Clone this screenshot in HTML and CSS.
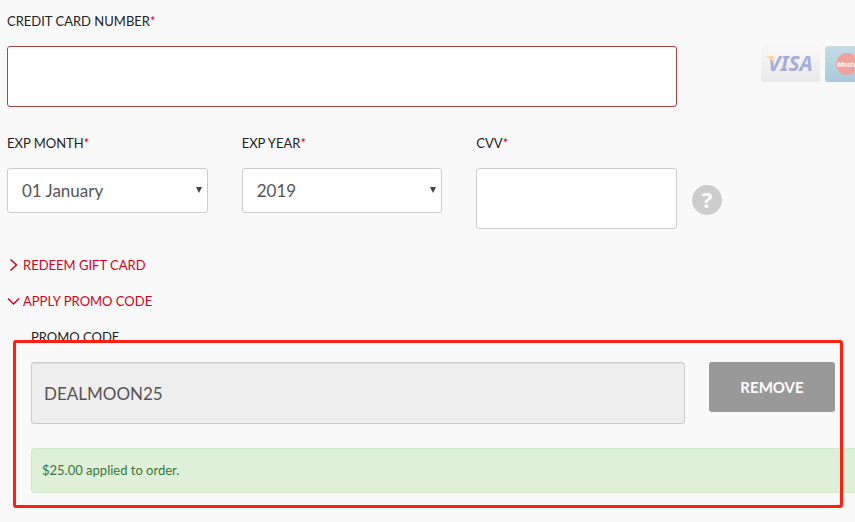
FILE: index.html
```html
<!DOCTYPE html>
<html lang="en">
  <head>
    <meta charset="utf-8">
    <meta name="viewport" content="width=device-width, initial-scale=1.0">
    <title>Payment</title>
    <link rel="stylesheet" href="styles.css">
  </head>
  <body>
    <form class="payment">
      <div class="row">
        <div class="field">
          <label for="card-number">CREDIT CARD NUMBER<span class="required">*</span></label>
          <input type="text" id="card-number" class="control error">
        </div>
        <div class="cards">
          <svg width="59" height="36" viewBox="0 0 59 36" role="img" aria-label="Visa">
            <defs>
              <linearGradient id="visa-bg" x1="0" y1="0" x2="0" y2="1">
                <stop offset="0" stop-color="#f8f8f8" />
                <stop offset="1" stop-color="#e8e8e8" />
              </linearGradient>
            </defs>
            <rect width="59" height="36" rx="3" fill="url(#visa-bg)" />
            <text x="7" y="25" class="visa-text">VISA</text>
            <path d="M4 10h8l1 8q-3-6-9-8z" fill="#fbd5a0" />
          </svg>
          <svg width="59" height="36" viewBox="0 0 59 36" role="img" aria-label="MasterCard">
            <defs>
              <linearGradient id="mc-bg" x1="0" y1="0" x2="0" y2="1">
                <stop offset="0" stop-color="#c5dce8" />
                <stop offset="1" stop-color="#a9c9dc" />
              </linearGradient>
            </defs>
            <rect width="59" height="36" rx="3" fill="url(#mc-bg)" />
            <circle cx="37" cy="18" r="11" fill="#f8d29c" />
            <circle cx="22" cy="18" r="11" fill="#eda39c" />
            <text x="12" y="21" class="mc-text">MasterCard</text>
          </svg>
        </div>
      </div>

      <div class="row">
        <div class="expiry">
          <div class="field">
            <label for="exp-month">EXP MONTH<span class="required">*</span></label>
            <div class="select">
              <select id="exp-month">
                <option>01 January</option>
                <option>02 February</option>
                <option>03 March</option>
              </select>
            </div>
          </div>
          <div class="field">
            <label for="exp-year">EXP YEAR<span class="required">*</span></label>
            <div class="select">
              <select id="exp-year">
                <option>2019</option>
                <option>2020</option>
                <option>2021</option>
              </select>
            </div>
          </div>
          <div class="field">
            <label for="cvv">CVV<span class="required">*</span></label>
            <input type="text" id="cvv" class="control">
          </div>
        </div>
        <button type="button" class="help" aria-label="What is CVV">?</button>
      </div>

      <a href="#" class="toggle">
        <svg width="12" height="14" viewBox="0 0 12 14"><path d="M3.500 1.500l6 5.500-6 5.500" /></svg>
        REDEEM GIFT CARD
      </a>
      <a href="#" class="toggle">
        <svg width="12" height="14" viewBox="0 0 12 14"><path d="M1 4.500l5.500 5.500 5.500-5.500" /></svg>
        APPLY PROMO CODE
      </a>

      <div class="promo">
        <label for="promo-code">PROMO CODE</label>
        <div class="promo-row">
          <input type="text" id="promo-code" class="control" value="DEALMOON25" readonly>
          <button type="button" class="btn">REMOVE</button>
        </div>
        <div class="alert">$25.00 applied to order.</div>
        <div class="highlight"></div>
      </div>
    </form>
  </body>
</html>
```

FILE: styles.css
```css
* {
  box-sizing: border-box;
}
body {
  margin: 0;
  background: #f9f9f9;
  color: #222;
  font-family: Lato, "Liberation Sans", sans-serif;
  font-size: 14px;
  line-height: 20px;
  overflow-x: hidden;
}
.payment {
  padding: 11px 0 24px 7px;
}
.row {
  display: grid;
  grid-template-columns: minmax(0, 1fr) 178px;
  margin-bottom: 26px;
}
label {
  display: block;
  margin-bottom: 15px;
  font-size: 13px;
}
.required {
  color: #d0021b;
}
.control,
select {
  display: block;
  width: 100%;
  border: 1px solid #ccc;
  border-radius: 3px;
  background: #fff;
  color: #555;
  font-family: inherit;
  font-size: 17px;
}
.control {
  height: 61px;
  padding: 0 12px;
}
.control.error {
  border-color: #a94442;
}
.control[readonly] {
  height: 62px;
  background: #eee;
  box-shadow: inset 0 1px 1px rgba(0, 0, 0, 0.075);
}

.cards {
  display: flex;
  gap: 5px;
  padding: 35px 0 0 84px;
  overflow: hidden;
}
.cards svg {
  flex: none;
}
.visa-text {
  font: italic bold 21px "Noto Sans", sans-serif;
  fill: #a5add8;
}
.mc-text {
  font: italic bold 7px "Liberation Sans", sans-serif;
  fill: #fff;
}

.expiry {
  display: grid;
  grid-template-columns: repeat(3, minmax(0, 1fr));
  gap: 34px;
}
.select {
  position: relative;
}
.select::after {
  content: "";
  position: absolute;
  top: 19px;
  right: 6px;
  border: solid transparent;
  border-width: 6px 3px 0;
  border-top-color: #444;
  pointer-events: none;
}
select {
  height: 45px;
  padding: 0 14px;
  appearance: none;
}
.help {
  width: 30px;
  height: 30px;
  margin: 52px 0 0 15px;
  padding: 0 0 2px;
  border: 0;
  border-radius: 50%;
  background: #ccc;
  color: #fff;
  font: bold 22px/28px "Noto Sans", sans-serif;
}

.toggle {
  display: flex;
  align-items: center;
  gap: 4px;
  margin-bottom: 16px;
  color: #d0021b;
  font-size: 13px;
  text-decoration: none;
}
.toggle svg {
  overflow: visible;
  fill: none;
  stroke: #d0021b;
  stroke-width: 1.5;
}

.promo {
  position: relative;
  margin-left: 24px;
}
.promo-row {
  display: grid;
  grid-template-columns: minmax(0, 1fr) 126px;
  align-items: start;
  gap: 24px;
  margin-right: 20px;
}
.btn {
  height: 50px;
  border: 0;
  border-radius: 3px;
  background: #999;
  color: #fff;
  font-family: inherit;
  font-size: 15px;
  font-weight: bold;
}
.alert {
  margin: 24px -20px 0 0;
  padding: 12px 10px;
  border: 1px solid #d0e9c6;
  border-radius: 3px;
  background: #dff0d8;
  color: #3c763d;
  font-size: 13px;
  line-height: 19px;
}
/* frame around the applied promo code */
.highlight {
  position: absolute;
  top: 13px;
  right: 12px;
  bottom: -15px;
  left: -18px;
  border: 3px solid #ff2010;
  border-radius: 3px;
  pointer-events: none;
}
```
